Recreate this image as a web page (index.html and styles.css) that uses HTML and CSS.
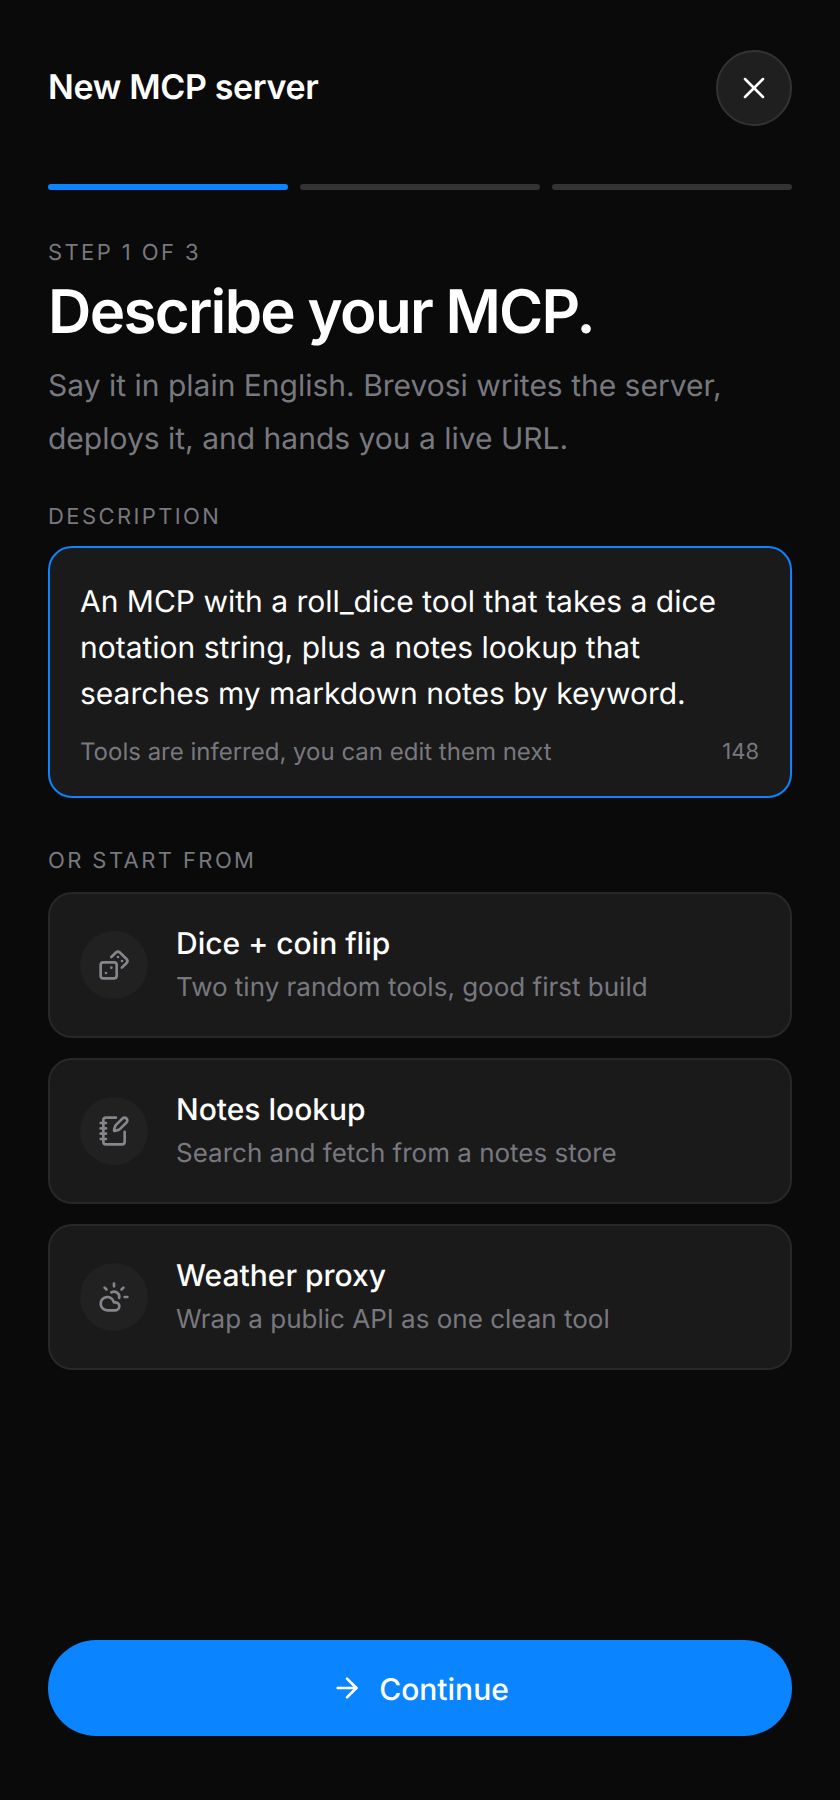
FILE: index.html
```html
<!DOCTYPE html>
<html>
	<head>
		<title>New MCP server</title>
		<meta name="viewport" content="width=device-width, initial-scale=1">
		<link rel="stylesheet" href="styles.css">
	</head>
	<body>
		<div class="screen">
			<div class="topbar">
				<h2 class="topbar-title">New MCP server</h2>
				<button class="close">
					<svg class="icon-close" viewBox="0 0 24 24"><path d="M18 6 6 18"/><path d="m6 6 12 12"/></svg>
				</button>
			</div>
			<div class="progress">
				<span class="bar bar-on"></span>
				<span class="bar"></span>
				<span class="bar"></span>
			</div>
			<div class="eyebrow">STEP 1 OF 3</div>
			<h1 class="headline">Describe your MCP.</h1>
			<p class="lead">Say it in plain English. Brevosi writes the server, deploys it, and hands you a live URL.</p>

			<div class="label label-desc">DESCRIPTION</div>
			<div class="field">
				<div class="field-text">An MCP with a roll_dice tool that takes a dice notation string, plus a notes lookup that searches my markdown notes by keyword.</div>
				<div class="field-foot">
					<span>Tools are inferred, you can edit them next</span>
					<span class="field-count">148</span>
				</div>
			</div>

			<div class="label label-start">OR START FROM</div>
			<div class="cards">
				<div class="card">
					<div class="card-icon">
						<svg viewBox="0 0 24 24"><rect width="12" height="12" x="2" y="10" rx="2" ry="2"/><path d="m17.92 14 3.5-3.5a2.24 2.24 0 0 0 0-3l-5-4.92a2.24 2.24 0 0 0-3 0L10 6"/><path d="M6 18h.01"/><path d="M10 14h.01"/><path d="M15 6h.01"/><path d="M18 9h.01"/></svg>
					</div>
					<div>
						<div class="card-title">Dice + coin flip</div>
						<div class="card-sub">Two tiny random tools, good first build</div>
					</div>
				</div>
				<div class="card">
					<div class="card-icon">
						<svg viewBox="0 0 24 24"><path d="M13.4 2H6a2 2 0 0 0-2 2v16a2 2 0 0 0 2 2h12a2 2 0 0 0 2-2v-7.4"/><path d="M2 6h4"/><path d="M2 10h4"/><path d="M2 14h4"/><path d="M2 18h4"/><path d="M21.378 5.626a1 1 0 1 0-3.004-3.004l-5.01 5.012a2 2 0 0 0-.506.854l-.837 2.87a.5.5 0 0 0 .62.62l2.87-.837a2 2 0 0 0 .854-.506z"/></svg>
					</div>
					<div>
						<div class="card-title">Notes lookup</div>
						<div class="card-sub">Search and fetch from a notes store</div>
					</div>
				</div>
				<div class="card">
					<div class="card-icon">
						<svg viewBox="0 0 24 24"><path d="M12 2v2"/><path d="m4.93 4.93 1.41 1.41"/><path d="M20 12h2"/><path d="m19.07 4.93-1.41 1.41"/><path d="M15.947 12.65a4 4 0 0 0-5.925-4.128"/><path d="M13 22H7a5 5 0 1 1 4.9-6H13a3 3 0 0 1 0 6Z"/></svg>
					</div>
					<div>
						<div class="card-title">Weather proxy</div>
						<div class="card-sub">Wrap a public API as one clean tool</div>
					</div>
				</div>
			</div>

			<button class="continue">
				<svg class="icon-arrow" viewBox="0 0 24 24"><path d="M5 12h14"/><path d="m12 5 7 7-7 7"/></svg>
				<span class="continue-text">Continue</span>
			</button>
		</div>
	</body>
</html>
```

FILE: styles.css
```css
* {
	box-sizing: border-box;
	font-family: Inter, "Liberation Sans", sans-serif;
	text-rendering: geometricPrecision;
}
body {
	margin: 0;
	background: #0a0a0a;
}
svg {
	fill: none;
	stroke: currentColor;
	stroke-width: 2;
	stroke-linecap: round;
	stroke-linejoin: round;
}
.screen {
	height: 1800px;
	padding: 50px 48px 64px;
	display: flex;
	flex-direction: column;
}
.topbar {
	display: flex;
	align-items: center;
	justify-content: space-between;
}
.topbar-title {
	margin: 0 0 1px;
	font-size: 34px;
	font-weight: 600;
	letter-spacing: -0.34px;
	color: #fff;
}
.close {
	width: 76px;
	height: 76px;
	border-radius: 50%;
	border: 2px solid #333;
	background: #1f1f1f;
	color: #fff;
	padding: 0;
	display: flex;
	align-items: center;
	justify-content: center;
}
.icon-close {
	width: 36px;
	height: 36px;
	stroke-width: 1.7;
}
.progress {
	display: flex;
	gap: 12px;
	margin-top: 58px;
}
.bar {
	flex: 1;
	height: 6px;
	border-radius: 3px;
	background: #333;
}
.bar-on {
	background: #0a84ff;
}
.eyebrow, .label {
	font-size: 22px;
	line-height: 24px;
	font-weight: 400;
	letter-spacing: 2.4px;
	color: #78787f;
}
.eyebrow {
	margin-top: 51px;
}
.headline {
	margin: 11px 0 0;
	font-size: 60px;
	line-height: 72px;
	font-weight: 600;
	letter-spacing: -1.7px;
	color: #fff;
}
.lead {
	margin: 12px 0 0;
	font-size: 30px;
	line-height: 53px;
	color: #78787f;
}
.label-desc {
	margin-top: 39px;
}
.field {
	margin-top: 17px;
	height: 252px;
	padding: 31px 31px 0 30px;
	background: #1a1a1a;
	border: 2px solid #0a84ff;
	border-radius: 24px;
}
.field-text {
	font-size: 30px;
	line-height: 46px;
	color: #fff;
}
.field-foot {
	display: flex;
	justify-content: space-between;
	align-items: center;
	margin-top: 20px;
	font-size: 24px;
	line-height: 30px;
	color: #78787f;
}
.field-count {
	font-size: 22px;
}
.label-start {
	margin-top: 51px;
}
.cards {
	margin-top: 19px;
	display: flex;
	flex-direction: column;
	gap: 20px;
}
.card {
	height: 146px;
	padding: 0 30px;
	display: flex;
	align-items: center;
	gap: 28px;
	background: #1a1a1a;
	border: 2px solid #282828;
	border-radius: 24px;
}
.card-icon {
	width: 68px;
	height: 68px;
	flex: none;
	border-radius: 50%;
	background: #212121;
	color: #85858c;
	display: flex;
	align-items: center;
	justify-content: center;
}
.card-icon svg {
	width: 32px;
	height: 32px;
}
.card-title {
	padding-top: 1px;
	font-size: 30px;
	line-height: 38px;
	font-weight: 500;
	color: #fff;
}
.card-sub {
	margin-top: 7px;
	font-size: 26px;
	line-height: 36px;
	color: #78787f;
}
.continue {
	margin-top: auto;
	height: 96px;
	border: 0;
	border-radius: 48px;
	background: #0a84ff;
	color: #fff;
	font-size: 30px;
	font-weight: 500;
	display: flex;
	align-items: center;
	justify-content: center;
	gap: 16px;
}
.continue-text {
	padding-top: 4px;
}
.icon-arrow {
	width: 32px;
	height: 32px;
}
```
